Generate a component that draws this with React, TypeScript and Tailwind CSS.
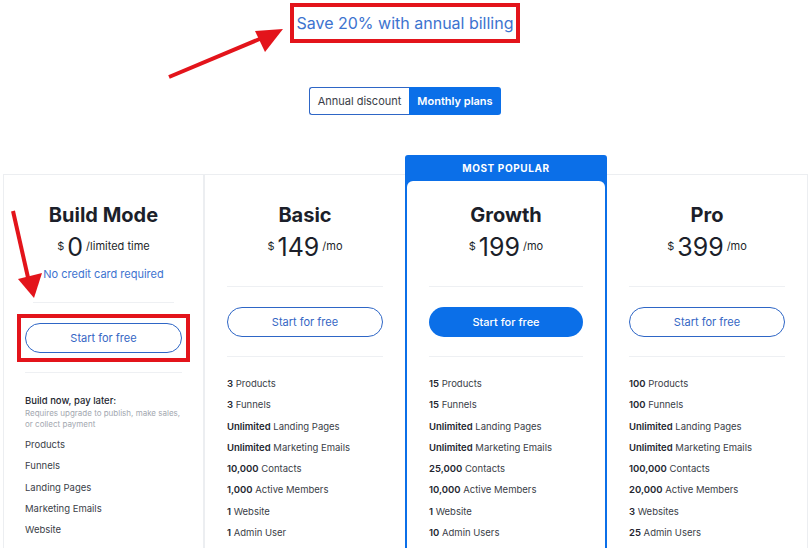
import React from "react";

type Feature = { b?: string; t: string };
type Plan = {
  name: string;
  price: string;
  per: string;
  popular?: boolean;
  note?: string;
  features: Feature[];
};

const plans: Plan[] = [
  {
    name: "Build Mode",
    price: "0",
    per: "/limited time",
    note: "No credit card required",
    features: [{ t: "Products" }, { t: "Funnels" }, { t: "Landing Pages" }, { t: "Marketing Emails" }, { t: "Website" }],
  },
  {
    name: "Basic",
    price: "149",
    per: "/mo",
    features: [
      { b: "3", t: " Products" },
      { b: "3", t: " Funnels" },
      { b: "Unlimited", t: " Landing Pages" },
      { b: "Unlimited", t: " Marketing Emails" },
      { b: "10,000", t: " Contacts" },
      { b: "1,000", t: " Active Members" },
      { b: "1", t: " Website" },
      { b: "1", t: " Admin User" },
    ],
  },
  {
    name: "Growth",
    price: "199",
    per: "/mo",
    popular: true,
    features: [
      { b: "15", t: " Products" },
      { b: "15", t: " Funnels" },
      { b: "Unlimited", t: " Landing Pages" },
      { b: "Unlimited", t: " Marketing Emails" },
      { b: "25,000", t: " Contacts" },
      { b: "10,000", t: " Active Members" },
      { b: "1", t: " Website" },
      { b: "10", t: " Admin Users" },
    ],
  },
  {
    name: "Pro",
    price: "399",
    per: "/mo",
    features: [
      { b: "100", t: " Products" },
      { b: "100", t: " Funnels" },
      { b: "Unlimited", t: " Landing Pages" },
      { b: "Unlimited", t: " Marketing Emails" },
      { b: "100,000", t: " Contacts" },
      { b: "20,000", t: " Active Members" },
      { b: "3", t: " Websites" },
      { b: "25", t: " Admin Users" },
    ],
  },
];

const PlanBody: React.FC<{ plan: Plan; build?: boolean }> = ({ plan, build }) => (
  <div className="flex flex-col">
    <h2 className="text-center text-[20px] leading-[24px] font-bold text-[#1c1f2a]">{plan.name}</h2>
    <div className="mt-[5px] flex h-[30px] items-center justify-center text-[#1c1f2a]">
      <span className="self-start mt-[6px] text-[11px] mr-[3px]">$</span>
      <span className="text-[25px] leading-[30px]">{plan.price}</span>
      <span className="self-start mt-[6px] ml-[3px] text-[11px]">{plan.per}</span>
    </div>
    {plan.note && (
      <div className="mt-[5px] text-center text-[11px] leading-[14px] text-[#3d73cf]">{plan.note}</div>
    )}
    <div className={`${plan.note ? "mt-[21px] mx-[8px]" : "mt-[24px]"} h-px bg-[#eef0f3]`} />
    <div className="relative mt-[20px]">
      <button
        className={`h-[30px] w-full rounded-full text-[11px] ${
          plan.popular
            ? "bg-[#0b6fe8] font-medium text-white"
            : "border border-[#2e66c6] bg-white text-[#3566c4]"
        }`}
      >
        Start for free
      </button>
      {build && <span className="pointer-events-none absolute -top-[9px] -bottom-[9px] -left-[8px] -right-[8px] border-[4px] border-[#e3141b]" />}
    </div>
    <div className="mt-[19px] h-px bg-[#eef0f3]" />
    {build ? (
      <div className="mt-[22px]">
        <div className="text-[9.5px] leading-[12px] font-medium text-[#23262f]">Build now, pay later:</div>
        <div className="mt-[1px] whitespace-nowrap text-[8px] leading-[11px] text-[#a3a8b0]">
          Requires upgrade to publish, make sales,
          <br />
          or collect payment
        </div>
        <ul className="mt-[4px] flex flex-col">
          {plan.features.map((f) => (
            <li key={f.t} className="h-[21.3px] leading-[21.3px] text-[9.5px] text-[#3a3e48]">
              {f.t}
            </li>
          ))}
        </ul>
      </div>
    ) : (
      <ul className="mt-[16px] flex flex-col">
        {plan.features.map((f) => (
          <li key={f.b + f.t} className="h-[21.3px] leading-[21.3px] text-[9.5px] text-[#3a3e48]">
            <span className="font-semibold text-[#23262f]">{f.b}</span>
            {f.t}
          </li>
        ))}
      </ul>
    )}
  </div>
);

export default function App() {
  return (
    <div
      className="relative h-[548px] w-[810px] overflow-hidden bg-white"
      style={{ fontFamily: "Inter, 'Noto Sans', sans-serif" }}
    >
      <div className="flex flex-col items-center">
        <div className="mt-[3px] flex h-[40px] w-[230px] items-center justify-center border-[4px] border-[#e3141b]">
          <span className="text-[16px] text-[#3d73cf]">Save 20% with annual billing</span>
        </div>
        <div className="mt-[44px] flex h-[28px] text-[11px]">
          <div className="flex w-[100px] items-center justify-center rounded-l-[3px] border border-r-0 border-[#2e66c6] text-[#3a3e48]">
            Annual discount
          </div>
          <div className="flex w-[92px] items-center justify-center rounded-r-[3px] bg-[#0b6fe8] font-semibold text-white">
            Monthly plans
          </div>
        </div>
      </div>

      <div className="mt-[40px] ml-[3px] flex items-start">
        {plans.map((plan, i) =>
          plan.popular ? (
            <div key={plan.name} className="h-[420px] w-[202px] rounded-t-[3px] border-[2px] border-[#0b6fe8] bg-[#0b6fe8]">
              <div className="flex h-[22px] items-center justify-center text-[10px] font-bold tracking-[0.06em] text-white">
                MOST POPULAR
              </div>
              <div className="mt-[2px] h-[400px] rounded-t-[6px] bg-white px-[22px] pt-[22px]">
                <PlanBody plan={plan} />
              </div>
            </div>
          ) : (
            <div
              key={plan.name}
              className={`mt-[19px] h-[400px] w-[201px] border border-[#eceef1] bg-white pt-[28px] ${
                i === 0 ? "px-[21px]" : "px-[22px]"
              } ${i === 1 ? "border-r-0" : ""} ${i === 3 ? "border-l-0" : ""}`}
            >
              <PlanBody plan={plan} build={i === 0} />
            </div>
          )
        )}
      </div>

      <svg className="pointer-events-none absolute left-0 top-0" width="810" height="548">
        <line x1="169" y1="77" x2="262" y2="38" stroke="#e3141b" strokeWidth="4" />
        <polygon points="283,29 255,31 265,52" fill="#e3141b" />
        <line x1="13" y1="211" x2="29" y2="282" stroke="#e3141b" strokeWidth="4" />
        <polygon points="34,298 18,279 42,273" fill="#e3141b" />
      </svg>
    </div>
  );
}
